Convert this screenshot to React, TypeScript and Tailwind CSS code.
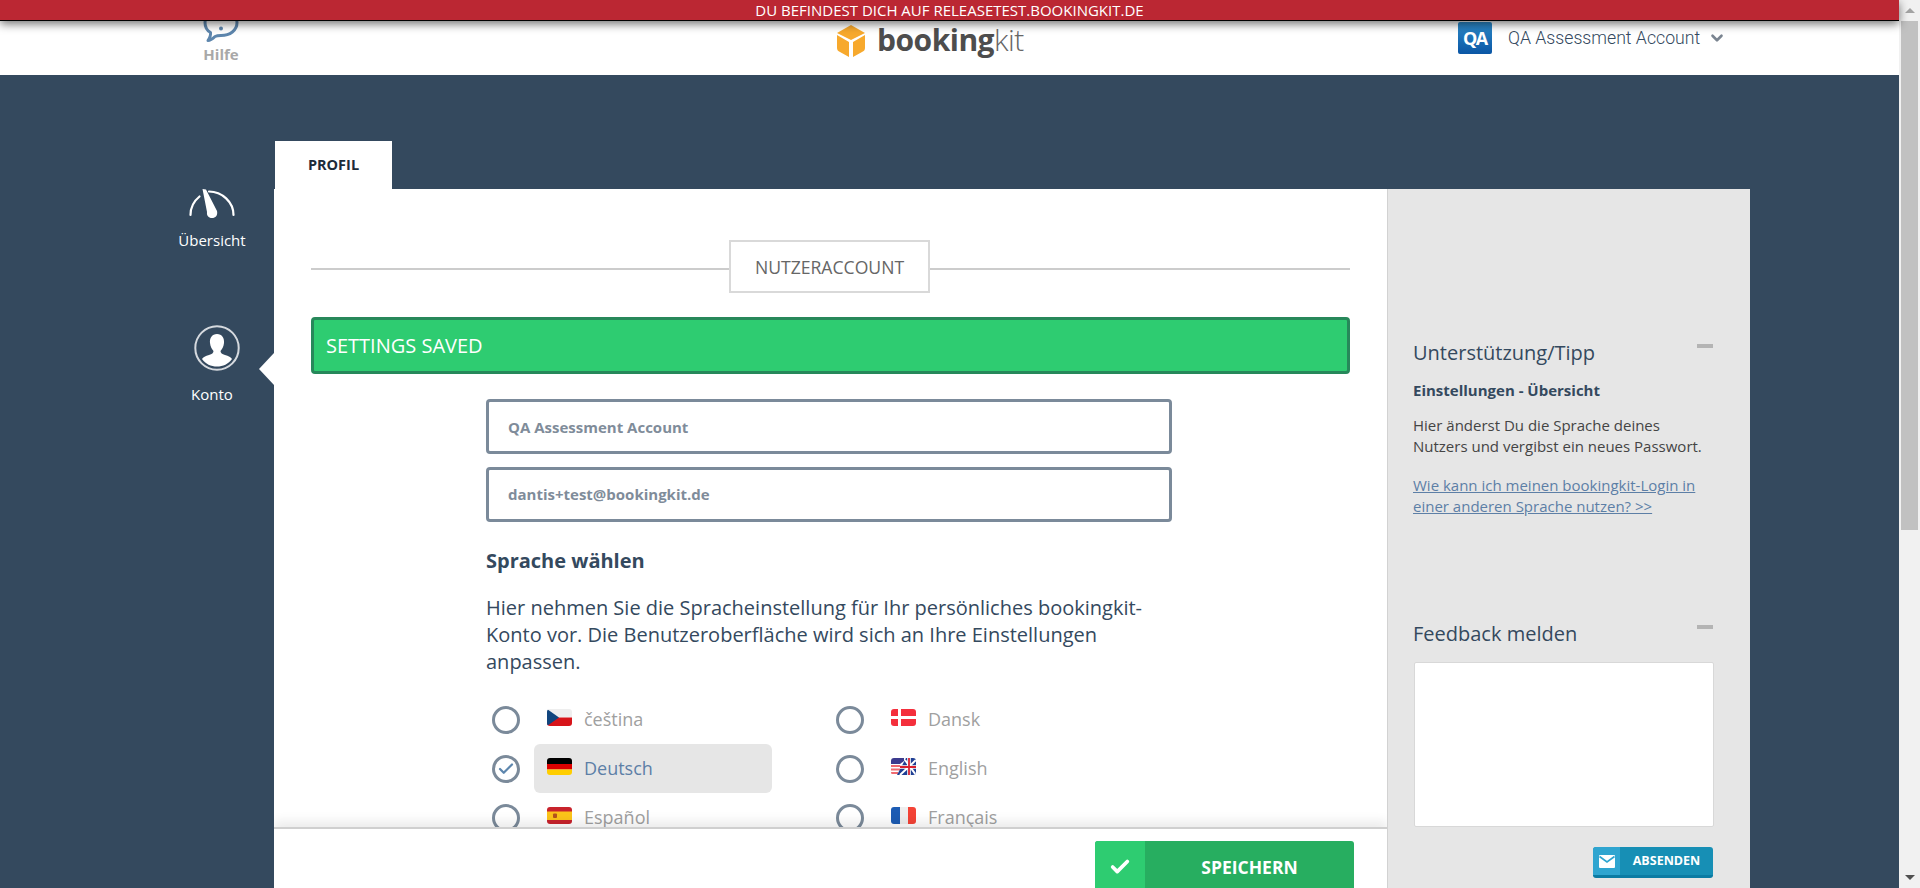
import { Check, ChevronDown } from "lucide-react"

const font = "font-['Open_Sans',sans-serif]"

function FlagCz() {
  return (
    <svg viewBox="0 0 25 17" className="h-[17px] w-[25px] rounded-[3px]">
      <rect width="25" height="8.5" fill="#eeeeee" />
      <rect y="8.5" width="25" height="8.5" fill="#d7141a" />
      <path d="M0 0L12 8.5L0 17Z" fill="#11457e" />
    </svg>
  )
}

function FlagDk() {
  return (
    <svg viewBox="0 0 25 17" className="h-[17px] w-[25px] rounded-[3px]">
      <rect width="25" height="17" fill="#f42f3c" />
      <rect x="7" width="3" height="17" fill="#ffffff" />
      <rect y="7" width="25" height="3" fill="#ffffff" />
    </svg>
  )
}

function FlagDe() {
  return (
    <svg viewBox="0 0 25 17" className="h-[17px] w-[25px] rounded-[3px]">
      <rect width="25" height="6" fill="#000000" />
      <rect y="6" width="25" height="5.5" fill="#dd0000" />
      <rect y="11.5" width="25" height="5.5" fill="#ffce00" />
    </svg>
  )
}

function FlagEn() {
  return (
    <svg viewBox="0 0 25 17" className="h-[17px] w-[25px] rounded-[3px]">
      <rect width="25" height="17" fill="#ffffff" />
      <rect y="7" width="13" height="2" fill="#f06a70" />
      <rect y="10.5" width="10" height="2" fill="#f06a70" />
      <rect y="14" width="7" height="2" fill="#f06a70" />
      <path d="M0 0H13V3L9 6H0Z" fill="#3c3b8e" />
      <path d="M25 0H15L6 17H25Z" fill="#1f3f94" />
      <path d="M9 17L25 2M14 2L25 17" stroke="#ffffff" strokeWidth="2" />
      <path d="M18 0V17M9 9H25" stroke="#ffffff" strokeWidth="3.6" />
      <path d="M18 0V17M9 9H25" stroke="#d8202f" strokeWidth="1.8" />
    </svg>
  )
}

function FlagEs() {
  return (
    <svg viewBox="0 0 25 17" className="h-[17px] w-[25px] rounded-[3px]">
      <rect width="25" height="17" fill="#c8232c" />
      <rect y="4.5" width="25" height="8.5" fill="#fcc419" />
      <rect x="6" y="6.5" width="4" height="4.5" rx="1" fill="#b5541c" />
    </svg>
  )
}

function FlagFr() {
  return (
    <svg viewBox="0 0 25 17" className="h-[17px] w-[25px] rounded-[3px]">
      <rect width="9" height="17" fill="#1d5cb4" />
      <rect x="9" width="8" height="17" fill="#eeeeee" />
      <rect x="17" width="8" height="17" fill="#f44336" />
    </svg>
  )
}

function Radio({ checked }: { checked?: boolean }) {
  return (
    <span className="flex h-[28px] w-[28px] shrink-0 items-center justify-center rounded-full border-[3px] border-[#7b8a9a]">
      {checked && <Check className="h-[18px] w-[18px] text-[#5d86ad]" strokeWidth={3} />}
    </span>
  )
}

function LangOption(props: { label: string; flag: React.ReactElement; checked?: boolean }) {
  return (
    <div className="flex h-[49px] items-center">
      <Radio checked={props.checked} />
      <div
        className={
          "ml-[14px] flex h-[49px] w-[238px] items-center rounded-[6px] pl-[13px] " +
          (props.checked ? "bg-[#e6e6e6] text-[#5d7fa6]" : "text-[#a0a0a0]")
        }
      >
        <span className="-mt-[5px] flex">{props.flag}</span>
        <span className="ml-[12px] -mt-[1px] text-[18px]">{props.label}</span>
      </div>
    </div>
  )
}

function SideNav() {
  return (
    <nav className="relative ml-[150px] flex w-[124px] flex-col items-center pt-[48px] text-[15px] text-white">
      <svg viewBox="0 0 46 30" className="h-[30px] w-[46px]" fill="none">
        <path d="M1.5 26C1.5 18 5 12 10.5 7.5" stroke="#fff" strokeWidth="2.2" strokeLinecap="round" />
        <path d="M20 2.5C33 2.5 44.5 13 44.5 26" stroke="#fff" strokeWidth="2.2" strokeLinecap="round" />
        <path d="M13.5 0L17 0.5L28 22C29 26.5 26.5 29 23 29C19.5 29 17.5 26.5 18 23Z" fill="#fff" />
      </svg>
      <span className="mt-[11px] leading-[20px]">Übersicht</span>

      <svg viewBox="0 0 46 46" className="ml-[9px] mt-[75px] h-[46px] w-[46px]" fill="none">
        <circle cx="23" cy="23" r="21.7" stroke="#d5d9de" strokeWidth="2" />
        <path
          d="M23 9C28 9 30.5 13 30 18C29.7 21.5 28 24.5 26.5 26C26.5 28 28 29 31 30C34.5 31.2 37 32 38 34C34.5 39 29 41.5 23 41.5C17 41.5 11.5 39 8 34C9 32 11.5 31.2 15 30C18 29 19.5 28 19.5 26C18 24.5 16.3 21.5 16 18C15.5 13 18 9 23 9Z"
          fill="#fff"
        />
      </svg>
      <span className="mt-[13px] leading-[20px]">Konto</span>

      {/* Pointer to the active section */}
      <span className="absolute right-0 top-[212px] h-0 w-0 border-y-[16px] border-r-[15px] border-y-transparent border-r-white" />
    </nav>
  )
}

function Sidebar() {
  return (
    <aside className="flex w-[363px] flex-col border-l border-[#d2d2d2] bg-[#e6e6e6] pl-[25px] pr-[37px] pt-[150px] text-[#34495e]">
      <div className="flex items-start justify-between">
        <h3 className="text-[20px] leading-[28px]">Unterstützung/Tipp</h3>
        <span className="mt-[5px] h-[4px] w-[16px] bg-[#b4b4b4]" />
      </div>
      <p className="mt-[13px] text-[15px] font-bold leading-[20px]">Einstellungen - Übersicht</p>
      <p className="mt-[15px] text-[15px] leading-[21px] text-[#444444]">
        Hier änderst Du die Sprache deines
        <br />
        Nutzers und vergibst ein neues Passwort.
      </p>
      <a className="mt-[18px] text-[15px] leading-[21px] text-[#5d7fa6] underline">
        Wie kann ich meinen bookingkit-Login in
        <br />
        einer anderen Sprache nutzen? &gt;&gt;
      </a>

      <div className="mt-[103px] flex items-start justify-between">
        <h3 className="text-[20px] leading-[28px]">Feedback melden</h3>
        <span className="mt-[5px] h-[4px] w-[16px] bg-[#b4b4b4]" />
      </div>
      <div className="ml-px mt-[14px] h-[165px] w-[300px] rounded-[2px] border border-[#d8d8d8] bg-white" />
      <button className="ml-auto mt-[20px] flex h-[31px] w-[120px] overflow-hidden rounded-[3px] border-b-[3px] border-[#0b7ba3] bg-[#178fb5] text-[12.5px] font-bold text-white">
        <span className="flex h-full w-[27px] items-center justify-center bg-[#2fa5d0]">
          <svg viewBox="0 0 16 13" className="h-[13px] w-[16px]" fill="none">
            <rect width="16" height="13" rx="1" fill="#fff" />
            <path d="M0.5 1.5L8 7L15.5 1.5" stroke="#2fa5d0" strokeWidth="1.6" />
          </svg>
        </span>
        <span className="flex h-full flex-1 items-center justify-center">ABSENDEN</span>
      </button>
    </aside>
  )
}

export default function App() {
  const langs = [
    { label: "čeština", flag: <FlagCz /> },
    { label: "Dansk", flag: <FlagDk /> },
    { label: "Deutsch", flag: <FlagDe />, checked: true },
    { label: "English", flag: <FlagEn /> },
    { label: "Español", flag: <FlagEs /> },
    { label: "Français", flag: <FlagFr /> },
  ]

  return (
    <div className={"flex h-[888px] w-[1920px] overflow-hidden " + font}>
      <div className="relative flex w-[1899px] flex-col bg-[#34495e]">
        {/* Release banner */}
        <div className="absolute left-0 top-0 z-20 flex h-[21px] w-full items-center justify-center border-b border-black bg-[#bb2733] text-[15px] leading-none text-white shadow-[0_3px_10px_rgba(0,0,0,0.55)]">
          DU BEFINDEST DICH AUF RELEASETEST.BOOKINGKIT.DE
        </div>

        {/* Header */}
        <header className="flex h-[75px] shrink-0 items-start overflow-hidden bg-white">
          <div className="ml-[200px] flex w-[42px] flex-col items-center">
            <svg viewBox="0 0 36 36" className="mt-[3px] h-[43px] w-[36px]" fill="none">
              <path
                d="M18 2C27 2 34 8 34 16C34 24 27 29 18 29C15.5 29 14 29 12 30C10 32 8 34 5 34C7 31 8 29 7.5 26C4 24 2 20 2 16C2 8 9 2 18 2Z"
                stroke="#5d86ad"
                strokeWidth="3"
                strokeLinejoin="round"
              />
              <circle cx="18" cy="22" r="2" fill="#5d86ad" />
            </svg>
            <span className="-mt-[1px] text-[15px] font-bold leading-[18px] text-[#a8a8a8]">Hilfe</span>
          </div>

          <div className="ml-[594px] mt-[21px] flex items-center">
            <svg viewBox="0 0 30 34" className="h-[34px] w-[30px]">
              <path d="M15 1L29 9L15 16L1 9Z" fill="#f7a92d" />
              <path d="M1 11L13 18V33L4 28C2 27 1 26 1 24Z" fill="#f7a92d" />
              <path d="M29 11L17 18V33L26 28C28 27 29 26 29 24Z" fill="#f7a92d" />
            </svg>
            <span className="ml-[11px] mt-[-1px] text-[30px] leading-[40px] tracking-[-0.5px] text-[#4d4d4d]">
              <span className="font-bold">booking</span>
              <span className="font-light text-[#666666]">kit</span>
            </span>
          </div>

          <div className="ml-[434px] mt-[22px] flex items-center">
            <div className="flex h-[32px] w-[34px] items-center justify-center rounded-[2px] bg-gradient-to-b from-[#2d8ac8] to-[#0a56a5] text-[18px] font-bold leading-none tracking-[-1.5px] text-white">
              QA
            </div>
            <span className="ml-[16px] font-['Roboto',sans-serif] text-[17.7px] font-light text-[#34495e]">
              QA Assessment Account
            </span>
            <ChevronDown className="ml-[8px] h-[18px] w-[18px] text-[#7a8490]" strokeWidth={3.5} />
          </div>
        </header>

        {/* Page body */}
        <div className="flex min-h-0 flex-1 pt-[66px]">
          <SideNav />

          <div className="flex w-[1476px] flex-col">
            <div className="ml-px flex h-[48px] w-[117px] items-center justify-center bg-white text-[14.5px] font-bold text-[#1d2b3a]">
              PROFIL
            </div>

            <div className="flex min-h-0 flex-1 bg-white">
              <main className="relative w-[1113px] overflow-hidden px-[37px] pt-[51px]">
                <div className="flex items-center">
                  <span className="mt-[5px] h-[2px] w-[418px] bg-[#cccccc]" />
                  <span className="flex h-[53px] w-[201px] items-center justify-center border-2 border-[#d9d9d9] bg-white pt-[1px] text-[17.6px] text-[#666666]">
                    NUTZERACCOUNT
                  </span>
                  <span className="mt-[5px] h-[2px] flex-1 bg-[#cccccc]" />
                </div>

                <div className="mt-[24px] flex h-[57px] items-center rounded-[4px] border-[3px] border-[#27885a] bg-[#2ecc71] pl-[12px] text-[20px] text-white">
                  SETTINGS SAVED
                </div>

                <div className="ml-[175px] w-[686px]">
                  <div className="mt-[25px] flex h-[55px] items-center rounded-[4px] border-[3px] border-[#7b8a9a] pl-[19px] pt-[1px] text-[15px] font-bold text-[#7f8c9a]">
                    QA Assessment Account
                  </div>
                  <div className="mt-[13px] flex h-[55px] items-center rounded-[4px] border-[3px] border-[#7b8a9a] pl-[19px] text-[15px] font-bold text-[#7f8c9a]">
                    dantis+test@bookingkit.de
                  </div>

                  <h2 className="mt-[25px] text-[20px] font-bold leading-[28px] text-[#34495e]">Sprache wählen</h2>
                  <p className="mt-[19px] w-[680px] text-[20px] leading-[27px] text-[#34495e]">
                    Hier nehmen Sie die Spracheinstellung für Ihr persönliches bookingkit-Konto vor. Die
                    Benutzeroberfläche wird sich an Ihre Einstellungen anpassen.
                  </p>

                  <div className="ml-[6px] mt-[20px] grid grid-cols-[344px_280px]">
                    {langs.map((l) => (
                      <LangOption key={l.label} label={l.label} flag={l.flag} checked={l.checked} />
                    ))}
                  </div>
                </div>

                {/* Sticky save bar */}
                <div className="absolute bottom-0 left-0 right-0 h-[61px] border-t-2 border-[#cfcfcf] bg-white shadow-[0_-6px_10px_rgba(0,0,0,0.08)]">
                  <button className="absolute left-[821px] top-[12px] flex h-[60px] w-[259px] overflow-hidden rounded-[3px] bg-[#27ae60] text-[17.5px] font-bold text-white">
                    <span className="flex h-[52px] w-[50px] items-center justify-center bg-[#2ecc71]">
                      <Check className="h-[22px] w-[22px]" strokeWidth={4} />
                    </span>
                    <span className="flex h-[52px] flex-1 items-center justify-center">SPEICHERN</span>
                  </button>
                </div>
              </main>

              <Sidebar />
            </div>
          </div>
        </div>
      </div>

      {/* Browser scrollbar */}
      <div className="flex w-[21px] flex-col items-center bg-[#f1f1f1]">
        <div className="flex h-[21px] w-full items-center justify-center">
          <span className="h-0 w-0 border-x-[5px] border-b-[5px] border-x-transparent border-b-[#a3a3a3]" />
        </div>
        <div className="h-[509px] w-[17px] bg-[#c1c1c1]" />
        <div className="flex-1" />
        <div className="flex h-[21px] w-full items-center justify-center">
          <span className="h-0 w-0 border-x-[5px] border-t-[5px] border-x-transparent border-t-[#505050]" />
        </div>
      </div>
    </div>
  )
}
